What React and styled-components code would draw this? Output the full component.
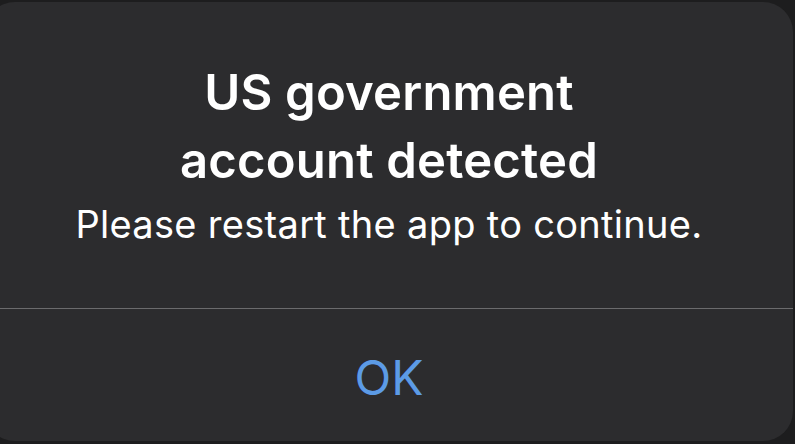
import styled, { createGlobalStyle } from "styled-components";

const GlobalStyle = createGlobalStyle`
  html, body {
    margin: 0;
    padding: 0;
    background-color: #1d1d1e;
    overflow: hidden;
  }
  body {
    font-family: Inter, "Liberation Sans", sans-serif;
    -webkit-font-smoothing: antialiased;
  }
`;

const Screen = styled.div`
  width: 795px;
  height: 444px;
  overflow: hidden;
  background-color: #1d1d1e;
`;

const Alert = styled.div`
  display: flex;
  flex-direction: column;
  width: 808px;
  height: 439px;
  margin: 2px 0 0 -15px;
  border-radius: 30px;
  background-color: #2c2c2e;
`;

const Body = styled.div`
  height: 306px;
  box-sizing: border-box;
  padding-top: 57px;
  display: flex;
  flex-direction: column;
  align-items: center;
  text-align: center;
  color: #ffffff;
`;

const Title = styled.h2`
  margin: 0;
  font-size: 49px;
  font-weight: 600;
  line-height: 68px;
  letter-spacing: 0.2px;
`;

const Message = styled.p`
  margin: 0;
  font-size: 38px;
  font-weight: 400;
  line-height: 58px;
  letter-spacing: 0.3px;
`;

const Divider = styled.div`
  height: 1px;
  background-color: #6b6b6d;
`;

const ActionButton = styled.button`
  flex: 1;
  border: none;
  padding: 4px 0 0;
  background-color: transparent;
  font-family: inherit;
  font-size: 48px;
  font-weight: 400;
  color: ${(props) => props.color || "#5c9be6"};
  cursor: pointer;
`;

const App = () => {
  return (
    <Screen>
      <GlobalStyle />
      <Alert>
        <Body>
          <Title>
            US government
            <br />
            account detected
          </Title>
          <Message>Please restart the app to continue.</Message>
        </Body>
        <Divider />
        <ActionButton>OK</ActionButton>
      </Alert>
    </Screen>
  );
};

export default App;
